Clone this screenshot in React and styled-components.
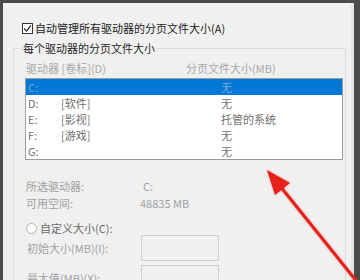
import React from 'react'
import styled, { createGlobalStyle } from 'styled-components'

const Global = createGlobalStyle`
  html, body { margin: 0; padding: 0; background: #4b4b4b; }
  #root { width: 360px; height: 280px; overflow: hidden; }
`

const Frame = styled.div`
  position: relative;
  display: flex;
  width: 360px;
  height: 280px;
  box-sizing: border-box;
  padding: 3px 6px 0 3px;
  background: #4b4b4b;
  font-family: "Noto Sans CJK SC", "Noto Sans", sans-serif;
  font-size: 11px;
  line-height: 14px;
  overflow: hidden;
`

const Dialog = styled.div`
  flex: 1;
  box-sizing: border-box;
  background: #f0f0f0;
  border-right: 3px solid #e4e4e4;
  padding: 18px 2px 0 10px;
  overflow: hidden;
`

const CheckRow = styled.label`
  display: flex;
  align-items: center;
  gap: 2px;
  height: 14px;
  margin-left: 9px;
  color: #1a1a1a;
`

const Box = styled.span`
  display: inline-flex;
  width: 11px;
  height: 11px;
  box-sizing: border-box;
  border: 1px solid #333;
  background: #fff;
  align-items: center;
  justify-content: center;
`

const Group = styled.fieldset`
  margin: 6px 0 0 0;
  width: 333px;
  box-sizing: border-box;
  border: 1px solid #dcdcdc;
  border-bottom: none;
  padding: 6px 2px 0 11px;
  min-height: 240px;
`

const Legend = styled.legend`
  margin-left: -3px;
  padding: 0 1px;
  color: #1f1f1f;
`

const HeaderRow = styled.div`
  display: grid;
  grid-template-columns: 160px 1fr;
  padding-left: 1px;
  margin-bottom: 3px;
  color: #a8a8a8;
`

const List = styled.div`
  border: 1px solid #9c9c9c;
  background: #fff;
  width: 318px;
  box-sizing: border-box;
`

const Row = styled.div`
  display: grid;
  grid-template-columns: 33px 160px 1fr;
  height: 16px;
  align-items: center;
  padding-left: 2px;
  background: ${p => (p.$sel ? '#0078d7' : 'transparent')};
  color: ${p => (p.$sel ? '#7fa8d8' : '#707070')};
`

const Info = styled.div`
  display: grid;
  grid-template-columns: 114px 1fr;
  row-gap: 3px;
  margin-top: 19px;
  padding-left: 1px;
  color: #a0a0a0;
`

const Value = styled.span`
  padding-left: ${p => p.$pad || 0}px;
`

const RadioRow = styled.div`
  display: flex;
  align-items: center;
  gap: 3px;
  margin-top: 11px;
  padding-left: 1px;
  color: #6a6a6a;
`

const Radio = styled.span`
  width: 11px;
  height: 11px;
  box-sizing: border-box;
  border-radius: 50%;
  border: 1px solid #b4b4b4;
  background: #fff;
`

const Field = styled.div`
  display: grid;
  grid-template-columns: 114px 78px;
  align-items: center;
  margin-top: ${p => p.$top || 0}px;
  padding-left: 2px;
  color: #a0a0a0;
`

const Input = styled.div`
  height: 26px;
  box-sizing: border-box;
  border: 1px solid #cfcfcf;
  background: #f0f0f0;
`

const Arrow = styled.svg`
  position: absolute;
  left: 0;
  top: 0;
  filter: drop-shadow(0 0 1px rgba(220, 40, 30, 0.5));
`

const rows = [
  ['C:', '', '无'],
  ['D:', '[软件]', '无'],
  ['E:', '[影视]', '托管的系统'],
  ['F:', '[游戏]', '无'],
  ['G:', '', '无'],
]

export default function App() {
  return (
    <>
      <Global />
      <Frame>
        <Dialog>
          <CheckRow>
            <Box>
              <svg width="9" height="9" viewBox="0 0 9 9">
                <path d="M1 4.5 L3.5 7 L8 1.5" fill="none" stroke="#333" strokeWidth="1.2" />
              </svg>
            </Box>
            自动管理所有驱动器的分页文件大小(A)
          </CheckRow>
          <Group>
            <Legend>每个驱动器的分页文件大小</Legend>
            <HeaderRow>
              <span>驱动器 [卷标](D)</span>
              <span>分页文件大小(MB)</span>
            </HeaderRow>
            <List>
              {rows.map((r, i) => (
                <Row key={r[0]} $sel={i === 0}>
                  <span>{r[0]}</span>
                  <span>{r[1]}</span>
                  <span>{r[2]}</span>
                </Row>
              ))}
            </List>
            <Info>
              <span>所选驱动器:</span>
              <Value $pad={3}>C:</Value>
              <span>可用空间:</span>
              <Value>48835 MB</Value>
            </Info>
            <RadioRow>
              <Radio />
              自定义大小(C):
            </RadioRow>
            <Field>
              <span>初始大小(MB)(I):</span>
              <Input />
            </Field>
            <Field $top={4}>
              <span>最大值(MB)(X):</span>
              <Input />
            </Field>
          </Group>
        </Dialog>
        <Arrow width="360" height="280" viewBox="0 0 360 280">
          <line x1="358" y1="283" x2="280" y2="186" stroke="#e8201a" strokeWidth="3" strokeLinecap="round" />
          <polygon points="267,170 290,183 275,195" fill="#e8201a" />
        </Arrow>
      </Frame>
    </>
  )
}
